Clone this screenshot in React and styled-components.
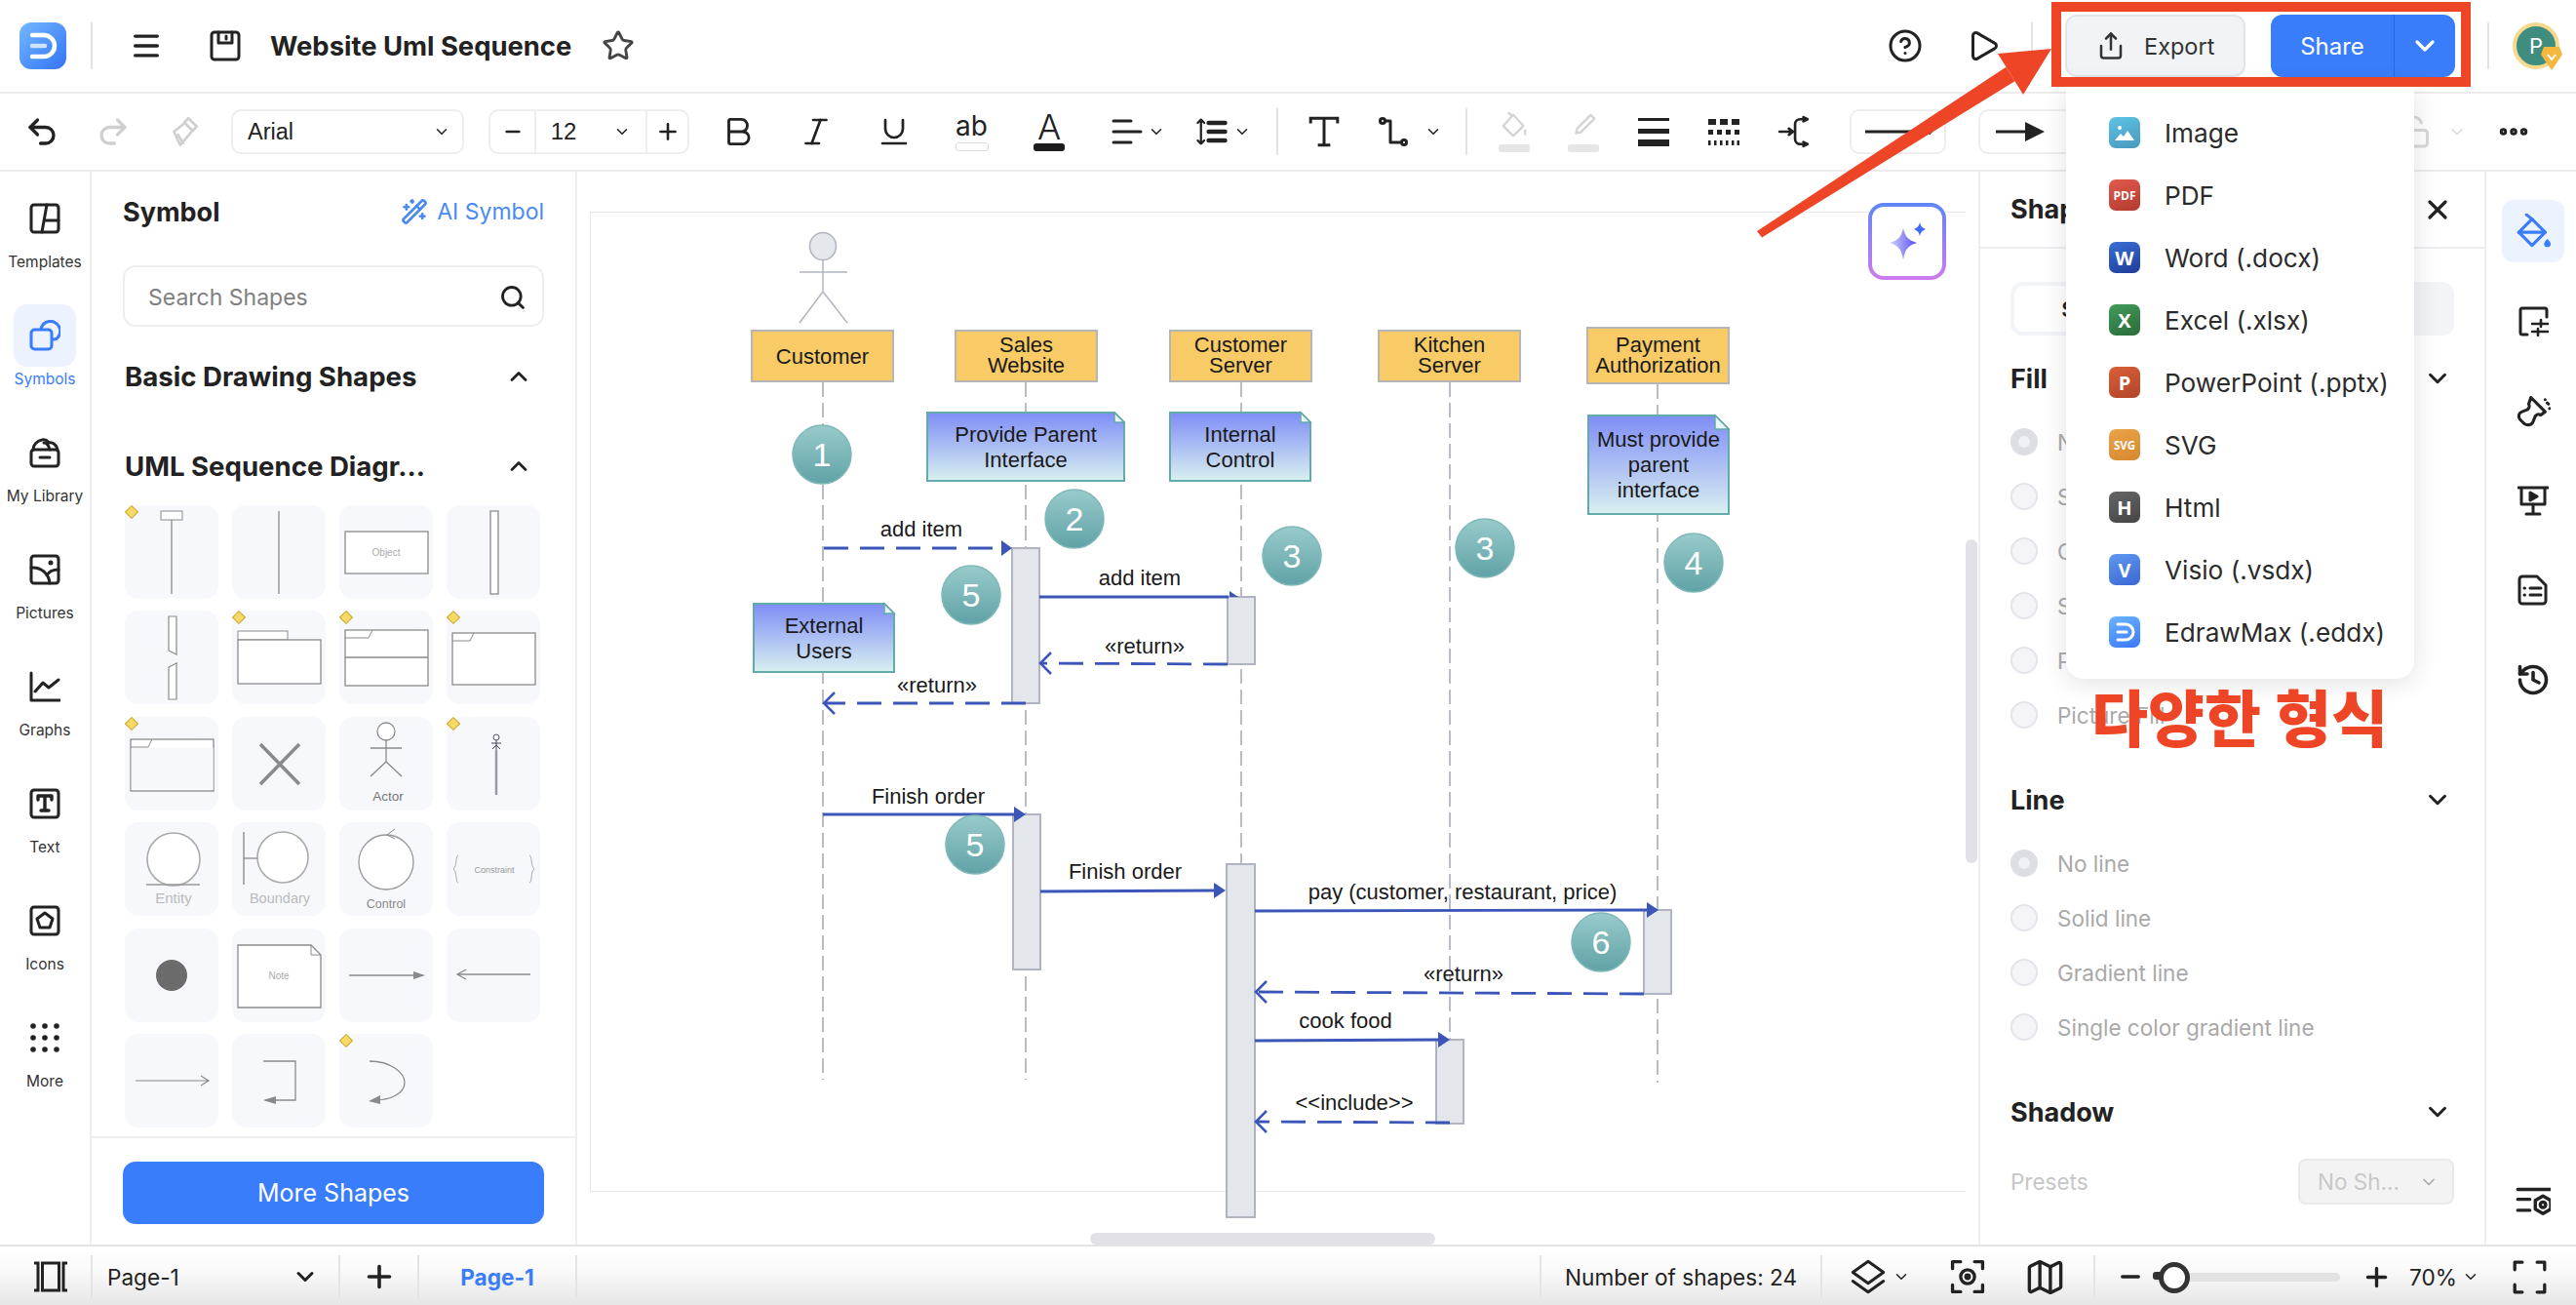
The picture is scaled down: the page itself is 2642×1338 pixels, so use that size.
import styled, { createGlobalStyle } from "styled-components";
import {
  Bold, ChevronDown, ChevronUp, CircleHelp, Ellipsis, History, Italic, LockOpen, Map as MapIcon, Menu,
  Minus, Play, Plus, Redo2, Search, Share, Star, Underline, Undo2, WandSparkles, X,
} from "lucide-react";

const GlobalStyle = createGlobalStyle`
  html, body { margin: 0; padding: 0; background: #fff; }
  body { font-family: Inter, "Noto Sans", sans-serif; color: #222; }
  * { box-sizing: border-box; }
`;

const Page = styled.div`
  position: relative;
  width: 2642px;
  height: 1338px;
  display: flex;
  flex-direction: column;
  overflow: hidden;
  background: #fff;
`;

/* top bar */
const TopBar = styled.header`
  height: 96px;
  flex: none;
  display: flex;
  align-items: center;
  padding: 0 17px 0 20px;
  border-bottom: 2px solid #ececec;
`;
const Slot = styled.div`
  flex: none;
  display: flex;
  align-items: center;
  justify-content: ${(p) => p.$justify || "center"};
  gap: ${(p) => p.$gap || 0}px;
  margin-left: ${(p) => (p.$auto ? "auto" : `${p.$ml || 0}px`)};
  width: ${(p) => (p.$w ? `${p.$w}px` : "auto")};
  padding-left: ${(p) => p.$pl || 0}px;
  color: ${(p) => p.$color || "#222"};
`;
const VLine = styled.div`
  flex: none;
  width: 2px;
  height: ${(p) => p.$h || 48}px;
  margin-left: ${(p) => p.$ml || 0}px;
  background: #e4e4e4;
`;
const Title = styled.h1`
  margin: 0 0 0 30px;
  font-size: 27.4px;
  font-weight: 700;
  color: #222;
  white-space: nowrap;
`;
const ExportButton = styled.div`
  flex: none;
  margin-left: 33px;
  width: 185px;
  height: 64px;
  display: flex;
  align-items: center;
  gap: 19px;
  padding-left: 30px;
  font-size: 23.5px;
  color: #333;
  background: #f2f3f7;
  border: 2px solid #e2e4ea;
  border-radius: 12px;
`;
const ShareButton = styled.div`
  flex: none;
  margin-left: 26px;
  width: 189px;
  height: 64px;
  display: flex;
  color: #fff;
  background: #3a7dfa;
  border-radius: 12px;
  font-size: 24px;
`;
const SharePart = styled.div`
  width: ${(p) => p.$w}px;
  display: flex;
  align-items: center;
  justify-content: center;
  border-left: ${(p) => (p.$split ? "1px solid #2d68d8" : "none")};
`;
const Avatar = styled.div`
  position: relative;
  flex: none;
  margin-left: 24px;
  width: 48px;
  height: 48px;
  display: flex;
  align-items: center;
  justify-content: center;
  border-radius: 50%;
  border: 4px solid #f7d98d;
  background: #3f8d7e;
  color: #fff;
  font-size: 22px;
`;
const AvatarBadge = styled.svg`
  position: absolute;
  right: -7px;
  bottom: -5px;
`;

/* format toolbar */
const ToolBar = styled.div`
  height: 80px;
  flex: none;
  display: flex;
  align-items: center;
  padding: 0 46px 0 6px;
  border-bottom: 2px solid #ececec;
`;
const SelectBox = styled.div`
  flex: none;
  display: flex;
  align-items: center;
  justify-content: space-between;
  margin-left: ${(p) => p.$ml || 0}px;
  width: ${(p) => p.$w}px;
  height: 46px;
  padding: 0 ${(p) => p.$pr || 12}px 0 ${(p) => p.$pl || 15}px;
  border: 2px solid #eeeeee;
  border-radius: 10px;
  font-size: 23.5px;
  color: #222;
  font-family: "Liberation Sans", sans-serif;
`;
const SizeGroup = styled.div`
  flex: none;
  display: flex;
  margin-left: 25px;
  width: 206px;
  height: 46px;
  border: 2px solid #eeeeee;
  border-radius: 10px;
`;
const SizeCell = styled.div`
  display: flex;
  align-items: center;
  justify-content: center;
  gap: ${(p) => p.$gap || 0}px;
  width: ${(p) => p.$w}px;
  border-left: ${(p) => (p.$line ? "2px solid #eeeeee" : "none")};
  font-size: 24px;
  font-family: "Liberation Sans", sans-serif;
`;
const AbGlyph = styled.div`
  display: flex;
  flex-direction: column;
  align-items: center;
  font-size: 28px;
  line-height: 28px;
  color: #222;
  &::after {
    content: "";
    width: 32px;
    height: 7px;
    margin-top: 3px;
    border: 1.5px solid #dddddd;
    border-radius: 3px;
  }
`;
const FontColorGlyph = styled.div`
  display: flex;
  flex-direction: column;
  align-items: center;
  font-size: 36px;
  font-weight: 300;
  line-height: 30px;
  color: #222;
  &::after {
    content: "";
    width: 32px;
    height: 8px;
    margin-top: 2px;
    background: #1c1c1c;
    border-radius: 3px;
  }
`;
const Swatch = styled.div`
  display: flex;
  flex-direction: column;
  align-items: center;
  gap: 3px;
  &::after {
    content: "";
    width: 32px;
    height: 8px;
    background: #e6e6e6;
    border-radius: 2px;
  }
`;

/* main row */
const Main = styled.div`
  flex: none;
  height: 1100px;
  display: flex;
`;
const LeftRail = styled.nav`
  flex: none;
  width: 94px;
  padding-top: 16px;
  display: flex;
  flex-direction: column;
  align-items: center;
  border-right: 2px solid #eeeef2;
`;
const RailItem = styled.div`
  flex: none;
  width: 64px;
  height: 120px;
  display: flex;
  flex-direction: column;
  align-items: center;
  color: ${(p) => (p.$active ? "#3a7dfa" : "#222")};
`;
const RailIcon = styled.div`
  width: 64px;
  height: 64px;
  flex: none;
  display: flex;
  align-items: center;
  justify-content: center;
  border-radius: 14px;
  background: ${(p) => (p.$active ? "#edf3fe" : "transparent")};
`;
const RailLabel = styled.div`
  height: 24px;
  line-height: 26px;
  font-size: 15.5px;
  white-space: nowrap;
  color: ${(p) => (p.$active ? "#3a7dfa" : "#333")};
`;

/* symbol panel */
const SymbolPanel = styled.aside`
  flex: none;
  width: 498px;
  display: flex;
  flex-direction: column;
  padding: 0 32px;
  border-right: 2px solid #eeeef2;
`;
const PanelHead = styled.div`
  height: 82px;
  flex: none;
  display: flex;
  align-items: center;
  justify-content: space-between;
`;
const PanelTitle = styled.h2`
  margin: 0;
  font-size: 27px;
  font-weight: 700;
  color: #222;
`;
const AiLink = styled.div`
  display: flex;
  align-items: center;
  gap: 9px;
  font-size: 23px;
  color: #4a8af5;
`;
const SearchBox = styled.div`
  flex: none;
  height: 63px;
  margin-top: 14px;
  display: flex;
  align-items: center;
  justify-content: space-between;
  padding: 2px 16px 0 24px;
  border: 2px solid #eeeeee;
  border-radius: 13px;
  font-size: 23px;
  color: #7f7f7f;
`;
const GroupHead = styled.div`
  flex: none;
  height: 60px;
  margin-top: ${(p) => p.$mt}px;
  padding: 0 12px 0 2px;
  display: flex;
  align-items: center;
  justify-content: space-between;
  font-size: 27.6px;
  font-weight: 700;
  color: #222;
`;
const ShapeGrid = styled.div`
  flex: none;
  margin: 10px 0 0 2px;
  display: grid;
  grid-template-columns: repeat(4, 96px);
  grid-auto-rows: 96px;
  column-gap: 14px;
  row-gap: 12.4px;
`;
const ShapeTile = styled.div`
  position: relative;
  width: 96px;
  height: 96px;
  border-radius: 14px;
  background: #f7f8fc;
  ${(p) => p.$badge && `
    &::before {
      content: "";
      position: absolute;
      left: 2px;
      top: 2px;
      width: 8px;
      height: 8px;
      transform: rotate(45deg);
      background: #f7d965;
      border: 1px solid #c9a93a;
    }
  `}
`;
const PanelFoot = styled.div`
  flex: none;
  margin: auto -32px 0;
  padding: 24px 32px 21px;
  border-top: 2px solid #eeeef2;
`;
const MoreButton = styled.div`
  height: 64px;
  display: flex;
  align-items: center;
  justify-content: center;
  border-radius: 13px;
  background: #3a7dfa;
  color: #fff;
  font-size: 25px;
`;

/* canvas */
const CanvasArea = styled.main`
  position: relative;
  flex: none;
  width: 1437px;
  padding: 41px 0 0 13px;
  overflow: hidden;
`;
const Sheet = styled.div`
  width: 1411px;
  height: 1005px;
  border: solid #e8e8ec;
  border-width: 1.5px 0 1.5px 1.5px;
`;
const DiagramSvg = styled.svg`
  position: absolute;
  left: 0;
  top: 0;
`;
const DiagramText = styled.text`
  font-family: "Liberation Sans", Arial, sans-serif;
  text-anchor: middle;
  fill: ${(p) => p.$fill || "#1a1a1a"};
  font-size: ${(p) => p.$size || 22}px;
`;
const SparkleButton = styled.div`
  position: absolute;
  top: 32px;
  right: 33px;
  width: 80px;
  height: 79px;
  display: flex;
  align-items: center;
  justify-content: center;
  border-radius: 16px;
  border: 4px solid transparent;
  background:
    linear-gradient(#fff, #fff) padding-box,
    linear-gradient(180deg, #5f86f6, #cd7bf0) border-box;
`;
const ScrollV = styled.div`
  position: absolute;
  right: 1px;
  top: 377px;
  width: 12px;
  height: 332px;
  border-radius: 6px;
  background: #e1e1e7;
`;
const ScrollH = styled.div`
  position: absolute;
  left: 526px;
  bottom: 0;
  width: 354px;
  height: 12px;
  border-radius: 6px;
  background: #e1e1e7;
`;

/* properties panel */
const PropsPanel = styled.aside`
  flex: none;
  width: 521px;
  display: flex;
  flex-direction: column;
  border: solid #eeeef2;
  border-width: 0 2px;
  padding: 0 31px;
`;
const PropsHead = styled.div`
  flex: none;
  height: 79px;
  margin: 0 -31px;
  padding: 0 32px 0 31px;
  display: flex;
  align-items: center;
  justify-content: space-between;
  border-bottom: 2px solid #eeeef2;
  font-size: 27px;
  font-weight: 700;
`;
const Tabs = styled.div`
  flex: none;
  height: 55px;
  margin-top: 34px;
  padding: 4px;
  display: flex;
  border-radius: 12px;
  background: #f3f4f8;
`;
const Tab = styled.div`
  flex: 1;
  display: flex;
  align-items: center;
  justify-content: center;
  border-radius: 9px;
  font-size: 22px;
  font-weight: 600;
  color: #222;
  background: ${(p) => (p.$active ? "#fff" : "transparent")};
`;
const SectionHead = styled.div`
  flex: none;
  height: 44px;
  margin-top: ${(p) => p.$mt}px;
  padding-right: 2px;
  display: flex;
  align-items: center;
  justify-content: space-between;
  font-size: 27px;
  font-weight: 700;
  color: #222;
`;
const RadioList = styled.div`
  flex: none;
  margin-top: 15px;
  display: grid;
  grid-auto-rows: 56px;
`;
const RadioRow = styled.div`
  display: flex;
  align-items: center;
  gap: 20px;
  font-size: 22.5px;
  color: #a9a9a9;
`;
const RadioDot = styled.span`
  flex: none;
  width: 28px;
  height: 28px;
  border-radius: 50%;
  background: ${(p) => (p.$on ? "#eff0f3" : "#f5f5f7")};
  border: ${(p) => (p.$on ? "8px solid #dcdee4" : "2px solid #e4e4ea")};
`;
const PresetRow = styled.div`
  flex: none;
  margin-top: 26px;
  display: flex;
  align-items: center;
  justify-content: space-between;
  font-size: 22.5px;
  color: #c6c6c6;
`;
const PresetSelect = styled.div`
  width: 160px;
  height: 47px;
  display: flex;
  align-items: center;
  justify-content: space-between;
  padding: 0 14px 0 18px;
  background: #f3f3f3;
  border: 2px solid #e9e9e9;
  border-radius: 8px;
  color: #c8c8c8;
`;
const RightRail = styled.nav`
  flex: none;
  width: 92px;
  padding: 29px 16px 11px;
  display: flex;
  flex-direction: column;
  gap: 28px;
`;
const RightIcon = styled.div`
  width: 64px;
  height: 64px;
  flex: none;
  display: flex;
  align-items: center;
  justify-content: center;
  border-radius: 12px;
  margin-top: ${(p) => (p.$bottom ? "auto" : "0")};
  background: ${(p) => (p.$active ? "#edf3fe" : "transparent")};
`;

/* status bar */
const StatusBar = styled.footer`
  flex: none;
  height: 62px;
  display: flex;
  align-items: center;
  padding: 2px 0 0 34px;
  border-top: 2px solid #e3e3e3;
  background: linear-gradient(180deg, #ffffff 0%, #fafafa 40%, #e6e6e6 100%);
  font-size: 22.6px;
`;
const SliderTrack = styled.div`
  position: relative;
  flex: none;
  margin-left: 9px;
  width: 192px;
  height: 9px;
  border-radius: 5px;
  background: #e2e2e2;
`;
const SliderKnob = styled.div`
  position: absolute;
  left: 6px;
  top: -11px;
  width: 32px;
  height: 32px;
  border-radius: 50%;
  background: #fff;
  border: 5px solid #333;
  &::before {
    content: "";
    position: absolute;
    left: -11px;
    top: 5px;
    width: 8px;
    height: 8px;
    background: #333;
    border-radius: 3px 0 0 3px;
  }
`;

/* export menu and red mark-up lying over the page */
const ExportMenu = styled.div`
  position: absolute;
  left: 2119px;
  top: 88px;
  width: 357px;
  padding: 16px 0;
  background: #fff;
  border-radius: 0 0 18px 18px;
  box-shadow: 0 4px 26px rgba(30, 30, 50, 0.13);
`;
const MenuRow = styled.div`
  height: 64px;
  display: flex;
  align-items: center;
  padding-left: 44px;
  gap: 25px;
  font-size: 26.2px;
  color: #2b2b2b;
  white-space: nowrap;
`;
const MenuIcon = styled.div`
  flex: none;
  width: 32px;
  height: 32px;
  display: flex;
  align-items: center;
  justify-content: center;
  border-radius: 7px;
  background: linear-gradient(160deg, ${(p) => p.$from}, ${(p) => p.$to});
  color: #fff;
  font-weight: 700;
  font-size: ${(p) => p.$size || 20}px;
  font-family: "Open Sans", sans-serif;
`;
const RedFrame = styled.div`
  position: absolute;
  left: 2104px;
  top: 2px;
  width: 430px;
  height: 87px;
  border: 10px solid #ee4527;
`;
const RedArrow = styled.svg`
  position: absolute;
  left: 1790px;
  top: 40px;
`;
const RedCaption = styled.div`
  position: absolute;
  left: 2145px;
  top: 690px;
  font-family: "Noto Sans CJK KR", sans-serif;
  font-weight: 900;
  font-size: 63px;
  line-height: 86px;
  color: #ee4527;
  white-space: nowrap;
`;

/* small hand-drawn icons */
const Ico = ({ size = 32, w = 3, children }) => (
  <svg width={size} height={size} viewBox="0 0 32 32" fill="none" stroke="currentColor" strokeWidth={w} strokeLinecap="round" strokeLinejoin="round">
    {children}
  </svg>
);

const Logo = () => (
  <svg width="48" height="48" viewBox="0 0 48 48">
    <defs>
      <linearGradient id="logoBg" x1="0" y1="0" x2="1" y2="1">
        <stop offset="0" stopColor="#72b8ff" />
        <stop offset="1" stopColor="#3473f7" />
      </linearGradient>
    </defs>
    <rect width="48" height="48" rx="12" fill="url(#logoBg)" />
    <path d="M13 13h12a11 11 0 0 1 0 22H13" fill="none" stroke="#fff" strokeWidth="4.5" strokeLinecap="round" />
    <path d="M13 24h13" stroke="#cfe3ff" strokeWidth="4.5" strokeLinecap="round" />
  </svg>
);

const SaveIcon = () => (
  <Ico><rect x="2" y="2" width="28" height="28" rx="3" /><path d="M9 2v11h14V2M17 6v3" /></Ico>
);
const PainterIcon = () => (
  <Ico size={34} w={2.5}><path d="M20 3l8 8-4 4-8-8zM16 8l-10 8 6 13 12-14" /><path d="M10 19l5 8" /></Ico>
);
const AlignIcon = () => (
  <svg width="32" height="26" viewBox="0 0 32 26" fill="none" stroke="#222" strokeWidth="3" strokeLinecap="round"><path d="M2 2h18M2 13h28M2 24h18" /></svg>
);
const SpacingIcon = () => (
  <Ico size={36} w={3.2}>
    <path d="M13 8h15M13 16h15M13 24h15" strokeWidth="4" />
    <path d="M6 5v22M3 8l3-3 3 3M3 24l3 3 3-3" strokeWidth="2" />
  </Ico>
);
const ConnectorIcon = () => (
  <Ico><circle cx="4" cy="5" r="2.5" w="2" /><path d="M7 5h5v22h10" /><circle cx="26" cy="27" r="2.5" /></Ico>
);
const FillToolIcon = () => (
  <Ico size={30} w={2.5}><path d="M15 3l11 12-11 11L4 15z" /><path d="M10 1l4 3M28 20v4" /></Ico>
);
const PenToolIcon = () => (
  <Ico size={30} w={2.5}><path d="M24 3l4 4-15 15-5 1 1-5z" /></Ico>
);
const WeightIcon = () => (
  <svg width="32" height="32" viewBox="0 0 32 32" fill="#222"><rect y="2" width="32" height="3" /><rect y="13" width="32" height="5" /><rect y="24" width="32" height="7" /></svg>
);
const DashIcon = () => (
  <svg width="32" height="32" viewBox="0 0 32 32" fill="#222">
    <rect y="3" width="8" height="6" /><rect x="12" y="3" width="8" height="6" /><rect x="24" y="3" width="8" height="6" />
    <rect y="14" width="5" height="5" /><rect x="9" y="14" width="5" height="5" /><rect x="18" y="14" width="5" height="5" /><rect x="27" y="14" width="5" height="5" />
    <rect y="25" width="2.5" height="5" /><rect x="6" y="25" width="2.5" height="5" /><rect x="12" y="25" width="2.5" height="5" /><rect x="18" y="25" width="2.5" height="5" /><rect x="24" y="25" width="2.5" height="5" /><rect x="29.5" y="25" width="2.5" height="5" />
  </svg>
);
const BranchIcon = () => (
  <Ico size={34} w={2.5}>
    <path d="M26 4h-4a5 5 0 0 0-5 5v14a5 5 0 0 0 5 5h4" />
    <path d="M2 16h12" />
    <path d="M11 13l4 3-4 3" fill="#222" />
    <path d="M25 2l4 2-4 2M25 26l4 2-4 2" fill="#222" />
  </Ico>
);
const LineSample = () => (
  <svg width="50" height="6" viewBox="0 0 50 6"><rect y="1.5" width="50" height="3" fill="#222" /></svg>
);
const ArrowSample = () => (
  <svg width="50" height="26" viewBox="0 0 50 26"><rect y="11.5" width="32" height="3" fill="#222" /><path d="M30 3l20 10-20 10z" fill="#222" /></svg>
);

const TemplatesIcon = () => (
  <Ico><rect x="2" y="2" width="28" height="28" rx="3" /><path d="M18 2l-5 28M15 18h15" /></Ico>
);
const SymbolsIcon = () => (
  <Ico><rect x="2" y="10" width="21" height="20" rx="3.5" /><path d="M12 9a10 10 0 1 1 18 8 6 6 0 0 1-6 3" /></Ico>
);
const LibraryIcon = () => (
  <Ico>
    <rect x="2" y="13" width="28" height="17" rx="3" />
    <path d="M4 13c0-5 4-9 9-10 3-1 6 1 7 3 4-1 8 2 9 7" />
    <path d="M11 21h10" />
    <path d="M15 6c3 0 5 3 6 7" />
  </Ico>
);
const PicturesIcon = () => (
  <Ico>
    <rect x="2" y="2" width="28" height="28" rx="3" />
    <path d="M2 14c10-1 18 6 19 16M18 22c2-4 6-6 12-6" />
    <circle cx="22" cy="9" r="1" fill="currentColor" />
  </Ico>
);
const GraphsIcon = () => (
  <Ico><path d="M2 2v28h29" /><path d="M6 21l8-9 6 5 10-8" /></Ico>
);
const TextBoxIcon = () => (
  <Ico>
    <rect x="2" y="2" width="28" height="28" rx="3" />
    <path d="M9 12V8h14v4M16 8v15M12 23h8" strokeWidth="3.4" />
  </Ico>
);
const IconsIcon = () => (
  <Ico><rect x="2" y="2" width="28" height="28" rx="3" /><path d="M16 8l8 6-3 9H11l-3-9z" /></Ico>
);
const MoreIcon = () => (
  <svg width="32" height="32" viewBox="0 0 32 32" fill="#222">
    {[4, 16, 28].flatMap((y) => [4, 16, 28].map((x) => <circle key={`${x}-${y}`} cx={x} cy={y} r="2.8" />))}
  </svg>
);

const FillSideIcon = () => (
  <Ico size={36} w={2.8}>
    <path d="M3 17L15 5l12 12-12 12z" />
    <path d="M3 17h24" />
    <path d="M10 1l5 4" />
    <path d="M29 23c-2 2-3 3-3 4.500a3 3 0 0 0 6 0c0-1.500-1-2.500-3-4.500z" fill="currentColor" stroke="none" />
  </Ico>
);
const AdjustIcon = () => (
  <Ico><path d="M30 12V5a2 2 0 0 0-2-2H5a2 2 0 0 0-2 2v23a2 2 0 0 0 2 2h5" /><path d="M15 19h16M15 27h16M24 15v7M21 24v7" strokeWidth="2.6" /></Ico>
);
const BrushIcon = () => (
  <Ico size={36} w={2.8}>
    <path d="M14 4l13 13-4 3c-2-1-3-1-5 1l-2 5c-1 3-5 4-8 2l-4-4c-2-3-1-6 2-7l5-2c2-2 2-3 1-5z" />
    <path d="M29 9l1 1M27 6l0 0M31 14l0 0" />
  </Ico>
);
const SlideIcon = () => (
  <Ico>
    <path d="M1 3h30M4 3v17h24V3" />
    <path d="M16 20v8M9 30h14" />
    <path d="M13 8l7 4-7 4z" fill="currentColor" />
  </Ico>
);
const OutlineIcon = () => (
  <Ico>
    <path d="M5 2h15l9 9v16a3 3 0 0 1-3 3H5a3 3 0 0 1-3-3V5a3 3 0 0 1 3-3z" />
    <path d="M13 14h11M13 21h11M7 14h.5M7 21h.5" />
  </Ico>
);
const SettingsListIcon = () => (
  <Ico size={36} w={3}>
    <path d="M2 4h30M2 13h11M2 23h11" />
    <path d="M25 10l7 4v8l-7 4-7-4v-8z" />
    <circle cx="25" cy="18" r="2.5" />
  </Ico>
);

const PanelsIcon = () => (
  <svg width="36" height="32" viewBox="0 0 36 32" fill="none" stroke="#222" strokeWidth="3">
    <rect x="9.500" y="2" width="17" height="28" />
    <path d="M1 2h4v28H1M35 2h-4v28h4" />
  </svg>
);
const LayersIcon = () => (
  <Ico size={36} w={2.6}><path d="M16 2l14 10-14 10L2 12z" /><path d="M2 20l14 10 14-10" /></Ico>
);
const CaptureIcon = () => (
  <Ico size={38} w={2.8}>
    <path d="M3 9V3h7M22 3h7v6M29 23v6h-7M10 29H3v-6" />
    <circle cx="16" cy="16" r="6" />
    <circle cx="16" cy="16" r="1.500" fill="currentColor" />
  </Ico>
);
const FullscreenIcon = () => (
  <Ico size={35} w={3}><path d="M2 9V2h7M23 2h7v7M30 23v7h-7M9 30H2v-7" /></Ico>
);

/* shape tiles */
const G = "#8a8a8a";
const tileLabel = (x, y, text, size, fill = "#aaa") => (
  <text x={x} y={y} fontSize={size} fill={fill} textAnchor="middle" fontFamily="Liberation Sans, sans-serif">{text}</text>
);
const folder = (y1, y2, tabW) => (
  <>
    <rect x="6" y={y1} width="85" height={y2 - y1} fill="#fff" stroke={G} strokeWidth="1.3" />
    <path d={`M6 ${y1 + 8}h${tabW - 4}l4-8`} fill="none" stroke={G} strokeWidth="1" />
  </>
);
const tiles = [
  { badge: true, art: <><rect x="37" y="6" width="22" height="9" fill="#fff" stroke={G} /><path d="M48 15v76" stroke={G} strokeWidth="1.300" /></> },
  { art: <path d="M48 6v85" stroke={G} strokeWidth="1.300" /> },
  { art: <><rect x="6" y="27" width="85" height="43" fill="#fff" stroke={G} strokeWidth="1.300" />{tileLabel(48, 52, "Object", 10)}</> },
  { art: <rect x="45" y="6" width="8" height="85" fill="#fff" stroke={G} strokeWidth="1.300" /> },
  { art: <><path d="M45 6h8v39l-8-4z" fill="#fff" stroke={G} strokeWidth="1.200" /><path d="M45 58l8-4v37h-8z" fill="#fff" stroke={G} strokeWidth="1.200" /></> },
  { badge: true, art: <><rect x="6" y="21" width="51" height="9" fill="#fff" stroke={G} /><rect x="6" y="30" width="85" height="45" fill="#fff" stroke={G} strokeWidth="1.300" /></> },
  { badge: true, art: <>{folder(20, 77, 28)}<path d="M6 48h85" stroke={G} strokeWidth="1.300" /></> },
  { badge: true, art: folder(23, 76, 22) },
  { badge: true, art: <>{folder(23, 76, 22)}<rect x="6.700" y="32" width="84" height="43" fill="#f7f8fc" /></> },
  { art: <path d="M29 28l40 41M69 28L29 69" stroke={G} strokeWidth="3.500" /> },
  { art: <><circle cx="48" cy="15" r="9" fill="#fff" stroke={G} strokeWidth="1.300" /><path d="M48 24v22M32 32h32M48 46L32 61M48 46l16 15" fill="none" stroke={G} strokeWidth="1.300" />{tileLabel(50, 86, "Actor", 13.500, "#777")}</> },
  { badge: true, art: <><circle cx="51" cy="21" r="3" fill="none" stroke="#556" /><path d="M46 27h10M51 24v10M47 33l4-4 4 4" fill="none" stroke="#446" /><path d="M51 34v46" stroke="#99a" strokeWidth="2.500" /></> },
  { art: <><circle cx="50" cy="38" r="27" fill="#fff" stroke="#aaa" strokeWidth="1.600" /><path d="M22 64h55" stroke="#999" strokeWidth="1.600" />{tileLabel(50, 83, "Entity", 15, "#bbb")}</> },
  { art: <><circle cx="52" cy="36" r="26" fill="#fff" stroke="#aaa" strokeWidth="1.600" /><path d="M12 10v54M12 37h14" stroke="#999" strokeWidth="1.600" />{tileLabel(49, 83, "Boundary", 14.500, "#bbb")}</> },
  { art: <><circle cx="48" cy="41" r="28" fill="#fff" stroke="#999" strokeWidth="1.300" /><path d="M57 7l-8 6 8 4" fill="none" stroke="#888" />{tileLabel(48, 88, "Control", 12.500, "#888")}</> },
  { art: <><path d="M12 34c-3 0-1 11-5 14 4 2 2 14 5 14M85 34c3 0 1 11 5 14-4 2-2 14-5 14" fill="none" stroke="#aaa" />{tileLabel(49, 52, "Constraint", 9, "#999")}</> },
  { art: <circle cx="48" cy="48" r="16" fill="#6b6b6b" /> },
  { art: <><path d="M6 17h75l10 10v54H6z" fill="#fff" stroke={G} strokeWidth="1.300" /><path d="M81 17v10h10" fill="none" stroke={G} />{tileLabel(48, 52, "Note", 10)}</> },
  { art: <><path d="M10 48h70" stroke={G} strokeWidth="1.500" /><path d="M76 44l12 4-12 4z" fill={G} /></> },
  { art: <path d="M86 47H11M20 42l-9 5 9 5" fill="none" stroke={G} strokeWidth="1.300" /> },
  { art: <path d="M11 48h75M78 43l8 5-8 5" fill="none" stroke={G} strokeWidth="1.200" /> },
  { art: <><path d="M32 28h33v40H34" fill="none" stroke={G} strokeWidth="1.300" /><path d="M45 64l-13 4 13 4z" fill={G} /></> },
  { badge: true, art: <><path d="M31 28c22 0 36 12 36 22 0 12-16 18-31 18" fill="none" stroke={G} strokeWidth="1.300" /><path d="M42 63l-12 6 12 3z" fill={G} /></> },
];

/* sequence diagram, coordinates are page pixels */
const BLUE = "#3b55b8";
const Lifeline = ({ x, y1, y2 }) => (
  <line x1={x} y1={y1} x2={x} y2={y2} stroke="#b2b5bf" strokeWidth="1.800" strokeDasharray="15 6" />
);
const HeadBox = ({ x, y, w, h, lines }) => (
  <g>
    <rect x={x} y={y} width={w} height={h} fill="#f8cb66" stroke="#b5b5b5" strokeWidth="2" />
    {lines.map((t, i) => (
      <DiagramText key={t} x={x + w / 2} y={y + h / 2 + (lines.length > 1 ? 6.500 : 8) + (i - (lines.length - 1) / 2) * 21}>{t}</DiagramText>
    ))}
  </g>
);
const Note = ({ x, y, w, h, fold = 10, lines, step = 26 }) => (
  <g>
    <path d={`M${x} ${y}H${x + w - fold}L${x + w} ${y + fold}V${y + h}H${x}Z`} fill="url(#noteFill)" stroke="#63abab" strokeWidth="2" />
    <path d={`M${x + w - fold} ${y}V${y + fold}H${x + w}Z`} fill="#e9f6f6" stroke="#63abab" strokeWidth="1.500" />
    {lines.map((t, i) => (
      <DiagramText key={t} x={x + w / 2} y={y + h / 2 + 7.500 + (i - (lines.length - 1) / 2) * step}>{t}</DiagramText>
    ))}
  </g>
);
const Bubble = ({ x, y, n }) => (
  <g>
    <circle cx={x} cy={y} r="30" fill="url(#bubbleFill)" stroke="#7fb8b8" strokeWidth="1.500" />
    <DiagramText x={x} y={y + 12} $size={34} $fill="#fff">{n}</DiagramText>
  </g>
);
const Activation = ({ x1, x2, y1, y2 }) => (
  <rect x={x1} y={y1} width={x2 - x1} height={y2 - y1} fill="#e3e7ec" stroke="#b0b4c0" strokeWidth="2" />
);
const SolidArrow = ({ x1, y1, x2, y2 }) => {
  const dir = x2 > x1 ? 1 : -1;
  return (
    <g>
      <line x1={x1} y1={y1} x2={x2 - dir * 10} y2={y2} stroke={BLUE} strokeWidth="2.800" />
      <path d={`M${x2} ${y2}l${-dir * 12} -8v16z`} fill={BLUE} />
    </g>
  );
};
const ReturnArrow = ({ x1, y1, x2, y2 }) => (
  <g fill="none" stroke={BLUE}>
    <line x1={x1} y1={y1} x2={x2} y2={y2} strokeWidth="2.800" strokeDasharray="25 12" />
    <path d={`M${x2 + 11} ${y2 - 11}L${x2} ${y2}L${x2 + 11} ${y2 + 11}`} strokeWidth="2.500" />
  </g>
);

const Diagram = () => (
  <DiagramSvg width="1437" height="1100" viewBox="592 176 1437 1100">
    <defs>
      <linearGradient id="noteFill" x1="0" y1="0" x2="0" y2="1">
        <stop offset="0" stopColor="#7e8df6" />
        <stop offset="1" stopColor="#d9f0f0" />
      </linearGradient>
      <linearGradient id="bubbleFill" x1="0" y1="0" x2="0" y2="1">
        <stop offset="0" stopColor="#99cbcb" />
        <stop offset="1" stopColor="#60a2a6" />
      </linearGradient>
    </defs>
    <Lifeline x={844} y1={392} y2={1107} />
    <Lifeline x={1052} y1={392} y2={1107} />
    <Lifeline x={1273} y1={392} y2={1107} />
    <Lifeline x={1487} y1={392} y2={1107} />
    <Lifeline x={1700} y1={394} y2={1110} />

    <g fill="#e4e8ed" stroke="#b2b5bf" strokeWidth="1.500">
      <ellipse cx="844" cy="252.500" rx="13.500" ry="14" />
      <path d="M844 266.500V299M820 279h49M820 331l24-32 25 32" fill="none" />
    </g>

    <HeadBox x={771} y={339} w={145} h={52} lines={["Customer"]} />
    <HeadBox x={980} y={339} w={145} h={52} lines={["Sales", "Website"]} />
    <HeadBox x={1200} y={339} w={145} h={52} lines={["Customer", "Server"]} />
    <HeadBox x={1414} y={339} w={145} h={52} lines={["Kitchen", "Server"]} />
    <HeadBox x={1628} y={336} w={145} h={57} lines={["Payment", "Authorization"]} />

    <Note x={951} y={423} w={202} h={70} lines={["Provide Parent", "Interface"]} />
    <Note x={1200} y={423} w={144} h={70} lines={["Internal", "Control"]} />
    <Note x={773} y={619} w={144} h={70} lines={["External", "Users"]} />
    <Note x={1629} y={426} w={144} h={101} fold={14} lines={["Must provide", "parent", "interface"]} />

    <Activation x1={1038} x2={1066} y1={562} y2={721} />
    <Activation x1={1259} x2={1287} y1={612} y2={681} />
    <Activation x1={1039} x2={1067} y1={835} y2={994} />
    <Activation x1={1258} x2={1287} y1={886} y2={1248} />
    <Activation x1={1686} x2={1714} y1={933} y2={1019} />
    <Activation x1={1473} x2={1501} y1={1066} y2={1152} />

    <line x1="845" y1="562" x2="1026" y2="562" stroke={BLUE} strokeWidth="2.800" strokeDasharray="25 12" />
    <path d="M1038 562l-11-8v16z" fill={BLUE} />
    <line x1="1066" y1="612" x2="1260" y2="612" stroke={BLUE} strokeWidth="2.800" />
    <path d="M1270 612l-9-6v6z" fill={BLUE} />
    <ReturnArrow x1={1259} y1={681} x2={1067} y2={680} />
    <ReturnArrow x1={1052} y1={721} x2={845} y2={721} />
    <SolidArrow x1={844} y1={835} x2={1052} y2={835} />
    <SolidArrow x1={1067} y1={914} x2={1257} y2={913} />
    <SolidArrow x1={1287} y1={934} x2={1701} y2={933} />
    <ReturnArrow x1={1686} y1={1019} x2={1288} y2={1017} />
    <SolidArrow x1={1287} y1={1067} x2={1487} y2={1066} />
    <ReturnArrow x1={1487} y1={1151} x2={1288} y2={1150} />

    <DiagramText x={945} y={550}>add item</DiagramText>
    <DiagramText x={1169} y={600}>add item</DiagramText>
    <DiagramText x={1174} y={670}>«return»</DiagramText>
    <DiagramText x={961} y={710}>«return»</DiagramText>
    <DiagramText x={952} y={824}>Finish order</DiagramText>
    <DiagramText x={1154} y={901}>Finish order</DiagramText>
    <DiagramText x={1500} y={922}>pay (customer, restaurant, price)</DiagramText>
    <DiagramText x={1501} y={1006}>«return»</DiagramText>
    <DiagramText x={1380} y={1054}>cook food</DiagramText>
    <DiagramText x={1389} y={1138}>{"<<include>>"}</DiagramText>

    <Bubble x={843} y={466} n="1" />
    <Bubble x={1102} y={532} n="2" />
    <Bubble x={996} y={610} n="5" />
    <Bubble x={1325} y={570} n="3" />
    <Bubble x={1523} y={562} n="3" />
    <Bubble x={1737} y={577} n="4" />
    <Bubble x={1000} y={866} n="5" />
    <Bubble x={1642} y={966} n="6" />
  </DiagramSvg>
);

const railItems = [
  { label: "Templates", icon: <TemplatesIcon /> },
  { label: "Symbols", icon: <SymbolsIcon />, active: true },
  { label: "My Library", icon: <LibraryIcon /> },
  { label: "Pictures", icon: <PicturesIcon /> },
  { label: "Graphs", icon: <GraphsIcon /> },
  { label: "Text", icon: <TextBoxIcon /> },
  { label: "Icons", icon: <IconsIcon /> },
  { label: "More", icon: <MoreIcon /> },
];

const fillOptions = ["No fill", "Solid fill", "Gradient fill", "Single color gradient fill", "Pattern fill", "Picture Fill"];
const lineOptions = ["No line", "Solid line", "Gradient line", "Single color gradient line"];

const exportItems = [
  { label: "Image", from: "#5cc5e4", to: "#4a97be", art: <svg width="22" height="18" viewBox="0 0 22 18" fill="#fff"><circle cx="6" cy="4" r="2" /><path d="M1 17l6-7 3 3 4-6 7 10z" /></svg> },
  { label: "PDF", from: "#e25a4c", to: "#b23a30", glyph: "PDF", size: 12 },
  { label: "Word (.docx)", from: "#3a6fd8", to: "#1e3c96", glyph: "W", size: 20 },
  { label: "Excel (.xlsx)", from: "#429a5a", to: "#2b6c3b", glyph: "X", size: 20 },
  { label: "PowerPoint (.pptx)", from: "#d95f38", to: "#b2452a", glyph: "P", size: 20 },
  { label: "SVG", from: "#eaa348", to: "#d8882e", glyph: "SVG", size: 11.5 },
  { label: "Html", from: "#666", to: "#454545", glyph: "H", size: 20 },
  { label: "Visio (.vsdx)", from: "#5f98f0", to: "#3a68d2", glyph: "V", size: 20 },
  { label: "EdrawMax (.eddx)", from: "#6ab4ff", to: "#3a78f8", art: <svg width="24" height="24" viewBox="0 0 24 24" fill="none" stroke="#fff" strokeWidth="3" strokeLinecap="round"><path d="M5 4h8a8 8 0 0 1 0 16H5" /><path d="M5 12h9" /></svg> },
];

export default function App() {
  return (
    <Page>
      <GlobalStyle />
      <TopBar>
        <Logo />
        <VLine $ml={25} />
        <Slot $ml={38}><Menu size={34} strokeWidth={2.4} /></Slot>
        <Slot $ml={48}><SaveIcon /></Slot>
        <Title>Website Uml Sequence</Title>
        <Slot $ml={31} $color="#444"><Star size={34} strokeWidth={2} /></Slot>
        <Slot $auto $color="#222"><CircleHelp size={36} strokeWidth={2} /></Slot>
        <Slot $ml={44}><Play size={36} strokeWidth={2} /></Slot>
        <VLine $ml={31} />
        <ExportButton><Share size={30} strokeWidth={2} />Export</ExportButton>
        <ShareButton>
          <SharePart $w={126}>Share</SharePart>
          <SharePart $w={63} $split><ChevronDown size={32} strokeWidth={2.4} /></SharePart>
        </ShareButton>
        <VLine $ml={33} />
        <Avatar>
          P
          <AvatarBadge width="22" height="26" viewBox="0 0 22 26">
            <path d="M3 2h16l3 8-11 16L0 10z" fill="#f4b740" />
            <path d="M7 10l4 5 4-5" fill="none" stroke="#fff" strokeWidth="2" />
          </AvatarBadge>
        </Avatar>
      </TopBar>

      <ToolBar>
        <Slot $w={73}><Undo2 size={36} strokeWidth={2.2} /></Slot>
        <Slot $w={73} $color="#cfcfcf"><Redo2 size={36} strokeWidth={2.2} /></Slot>
        <Slot $w={73} $color="#cfcfcf"><PainterIcon /></Slot>
        <SelectBox $ml={12} $w={239}>Arial<ChevronDown size={18} strokeWidth={2} /></SelectBox>
        <SizeGroup>
          <SizeCell $w={45}><Minus size={22} strokeWidth={2.6} /></SizeCell>
          <SizeCell $w={114} $line $gap={38}>12<ChevronDown size={18} strokeWidth={2} /></SizeCell>
          <SizeCell $w={43} $line><Plus size={26} strokeWidth={2.4} /></SizeCell>
        </SizeGroup>
        <Slot $ml={10} $w={80}><Bold size={38} strokeWidth={1.8} /></Slot>
        <Slot $w={80}><Italic size={36} strokeWidth={1.8} /></Slot>
        <Slot $w={79}><Underline size={36} strokeWidth={1.8} /></Slot>
        <Slot $w={81}><AbGlyph>ab</AbGlyph></Slot>
        <Slot $w={78}><FontColorGlyph>A</FontColorGlyph></Slot>
        <Slot $w={90} $justify="flex-start" $pl={25} $gap={5}><AlignIcon /><ChevronDown size={18} strokeWidth={2} /></Slot>
        <Slot $w={104} $justify="flex-start" $pl={20} $gap={4}><SpacingIcon /><ChevronDown size={18} strokeWidth={2} /></Slot>
        <VLine $h={48} />
        <Slot $w={94}><svg width="34" height="34" viewBox="0 0 32 32" fill="none" stroke="#222" strokeWidth="2.800"><path d="M3 8V3h26v5M16 3v26M10 29h12" /></svg></Slot>
        <Slot $w={98} $justify="flex-start" $pl={9} $gap={15}><ConnectorIcon /><ChevronDown size={18} strokeWidth={2} /></Slot>
        <VLine $h={48} />
        <Slot $w={96} $color="#d4d4d4"><Swatch><FillToolIcon /></Swatch></Slot>
        <Slot $w={46} $color="#d4d4d4"><Swatch><PenToolIcon /></Swatch></Slot>
        <Slot $w={98}><WeightIcon /></Slot>
        <Slot $w={46}><DashIcon /></Slot>
        <Slot $w={98}><BranchIcon /></Slot>
        <SelectBox $ml={8} $w={99} $pl={14} $pr={6}><LineSample /><ChevronDown size={18} strokeWidth={2} /></SelectBox>
        <SelectBox $ml={33} $w={121} $pl={16} $pr={12}><ArrowSample /><ChevronDown size={18} strokeWidth={2} /></SelectBox>
        <Slot $auto $gap={16} $color="#d8d8d8"><LockOpen size={36} strokeWidth={2} /><ChevronDown size={20} strokeWidth={2} /></Slot>
        <Slot $ml={30}><Ellipsis size={36} strokeWidth={3} /></Slot>
      </ToolBar>

      <Main>
        <LeftRail>
          {railItems.map((item) => (
            <RailItem key={item.label} $active={item.active}>
              <RailIcon $active={item.active}>{item.icon}</RailIcon>
              <RailLabel $active={item.active}>{item.label}</RailLabel>
            </RailItem>
          ))}
        </LeftRail>

        <SymbolPanel>
          <PanelHead>
            <PanelTitle>Symbol</PanelTitle>
            <AiLink><WandSparkles size={28} strokeWidth={2.2} />AI Symbol</AiLink>
          </PanelHead>
          <SearchBox>Search Shapes<Search size={28} strokeWidth={2.4} color="#222" /></SearchBox>
          <GroupHead $mt={21}>Basic Drawing Shapes<ChevronUp size={28} strokeWidth={2.4} /></GroupHead>
          <GroupHead $mt={32}>UML Sequence Diagr...<ChevronUp size={28} strokeWidth={2.4} /></GroupHead>
          <ShapeGrid>
            {tiles.map((tile, i) => (
              <ShapeTile key={i} $badge={tile.badge}>
                <svg width="96" height="96" viewBox="0 0 96 96">{tile.art}</svg>
              </ShapeTile>
            ))}
          </ShapeGrid>
          <PanelFoot><MoreButton>More Shapes</MoreButton></PanelFoot>
        </SymbolPanel>

        <CanvasArea>
          <Sheet />
          <Diagram />
          <SparkleButton>
            <svg width="48" height="44" viewBox="0 0 48 44">
              <defs>
                <linearGradient id="sparkFill" x1="0" y1="0" x2="1" y2="0">
                  <stop offset="0" stopColor="#cfd8fb" />
                  <stop offset="1" stopColor="#5a4af0" />
                </linearGradient>
              </defs>
              <path d="M20 8c2 9 5 12 14 15-9 3-12 6-14 17-2-11-5-14-14-17 9-3 12-6 14-15z" fill="url(#sparkFill)" />
              <path d="M37 2c1 4 2 5 6 7-4 2-5 3-6 7-1-4-2-5-6-7 4-2 5-3 6-7z" fill="#3f6bf6" />
            </svg>
          </SparkleButton>
          <ScrollV />
          <ScrollH />
        </CanvasArea>

        <PropsPanel>
          <PropsHead>Shape Style<X size={32} strokeWidth={2.4} /></PropsHead>
          <Tabs>
            <Tab $active>Shape Style</Tab>
            <Tab>Text</Tab>
          </Tabs>
          <SectionHead $mt={22}>Fill<ChevronDown size={30} strokeWidth={2.4} /></SectionHead>
          <RadioList>
            {fillOptions.map((label, i) => (
              <RadioRow key={label}><RadioDot $on={i === 0} />{label}</RadioRow>
            ))}
          </RadioList>
          <SectionHead $mt={37}>Line<ChevronDown size={30} strokeWidth={2.4} /></SectionHead>
          <RadioList>
            {lineOptions.map((label, i) => (
              <RadioRow key={label}><RadioDot $on={i === 0} />{label}</RadioRow>
            ))}
          </RadioList>
          <SectionHead $mt={37}>Shadow<ChevronDown size={30} strokeWidth={2.4} /></SectionHead>
          <PresetRow>
            Presets
            <PresetSelect>No Sh...<ChevronDown size={20} strokeWidth={2} color="#aaa" /></PresetSelect>
          </PresetRow>
        </PropsPanel>

        <RightRail>
          <RightIcon $active><Slot $color="#3a7dfa"><FillSideIcon /></Slot></RightIcon>
          <RightIcon><AdjustIcon /></RightIcon>
          <RightIcon><BrushIcon /></RightIcon>
          <RightIcon><SlideIcon /></RightIcon>
          <RightIcon><OutlineIcon /></RightIcon>
          <RightIcon><History size={36} strokeWidth={2.4} /></RightIcon>
          <RightIcon $bottom><SettingsListIcon /></RightIcon>
        </RightRail>
      </Main>

      <StatusBar>
        <PanelsIcon />
        <VLine $ml={23} $h={44} />
        <Slot $ml={15} $w={217} $justify="space-between">Page-1<ChevronDown size={28} strokeWidth={2.6} /></Slot>
        <VLine $ml={20} $h={44} />
        <Slot $w={79}><Plus size={36} strokeWidth={2.4} /></Slot>
        <VLine $h={44} />
        <Slot $w={160} $color="#3a7dfa"><strong>Page-1</strong></Slot>
        <VLine $h={44} />
        <VLine $ml={987} $h={44} />
        <Slot $w={286} $justify="flex-start" $pl={24}>Number of shapes: 24</Slot>
        <VLine $h={44} />
        <Slot $ml={29} $gap={7}><LayersIcon /><ChevronDown size={18} strokeWidth={2} /></Slot>
        <Slot $ml={40}><CaptureIcon /></Slot>
        <Slot $ml={39}><MapIcon size={43} strokeWidth={1.9} /></Slot>
        <VLine $ml={28} $h={44} />
        <Slot $ml={22}><Minus size={28} strokeWidth={3} /></Slot>
        <SliderTrack><SliderKnob /></SliderTrack>
        <Slot $ml={22}><Plus size={31} strokeWidth={2.6} /></Slot>
        <Slot $ml={18} $gap={5}>70%<ChevronDown size={18} strokeWidth={2} /></Slot>
        <Slot $ml={34}><FullscreenIcon /></Slot>
      </StatusBar>

      <ExportMenu>
        {exportItems.map((item) => (
          <MenuRow key={item.label}>
            <MenuIcon $from={item.from} $to={item.to} $size={item.size}>{item.art || item.glyph}</MenuIcon>
            {item.label}
          </MenuRow>
        ))}
      </ExportMenu>
      <RedFrame />
      <RedArrow width="330" height="210" viewBox="1790 40 330 210">
        <path d="M1802 237L1807 243.500L2066.500 83.200L2057.500 68.800z" fill="#ee4527" />
        <path d="M2104 50L2049 55L2075 97z" fill="#ee4527" />
      </RedArrow>
      <RedCaption>다양한 형식</RedCaption>
    </Page>
  );
}
